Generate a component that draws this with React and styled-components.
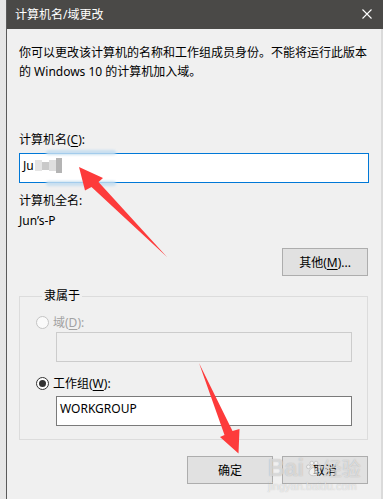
import React from 'react'
import styled, { createGlobalStyle } from 'styled-components'

const GlobalStyle = createGlobalStyle`
    html, body {
        margin: 0;
        padding: 0;
    }
    body {
        font-family: "Noto Sans", "Noto Sans CJK SC", sans-serif;
        font-size: 12px;
        color: #000;
        overflow: hidden;
    }
`

const FONT = `"Noto Sans", "Noto Sans CJK SC", sans-serif`

export default function App() {
    return (
        <SCREEN_STY>
            <GlobalStyle />
            <Window>
                <TitleBar>
                    <Title>计算机名/域更改</Title>
                    <CloseIcon viewBox="0 0 10 10">
                        <path d="M0.5 0.5 L9.5 9.5 M9.5 0.5 L0.5 9.5" />
                    </CloseIcon>
                </TitleBar>

                <Body>
                    <Intro>
                        你可以更改该计算机的名称和工作组成员身份。不能将运行此版本
                        <br />
                        的 Windows 10 的计算机加入域。
                    </Intro>

                    <FieldLabel $top={51}>计算机名(<AccessKey>C</AccessKey>):</FieldLabel>
                    <TextBox $state="focused" $top={5}>
                        Ju
                        <Mosaic>
                            <i style={{ background: '#e4e4e4' }} />
                            <i style={{ background: '#c9c9c9' }} />
                            <i style={{ background: '#dedede' }} />
                            <i style={{ background: '#b4b4b4' }} />
                        </Mosaic>
                        <Smear $pos="top" />
                        <Smear $pos="bottom" />
                    </TextBox>

                    <FieldLabel $top={10}>计算机全名:</FieldLabel>
                    <FieldLabel $top={4}>Jun’s-P</FieldLabel>

                    <ButtonRow $top={19}>
                        <Button>其他(<AccessKey>M</AccessKey>)...</Button>
                    </ButtonRow>

                    <GroupBox>
                        <Legend>隶属于</Legend>
                        <RadioRow $disabled $top={10}>
                            <Radio $disabled />
                            <span>域(<AccessKey>D</AccessKey>):</span>
                        </RadioRow>
                        <TextBox $state="disabled" $top={2} $indent />
                        <RadioRow $top={13}>
                            <Radio $checked />
                            <span>工作组(<AccessKey>W</AccessKey>):</span>
                        </RadioRow>
                        <TextBox $top={5} $indent>WORKGROUP</TextBox>
                    </GroupBox>

                    <ButtonRow $top={16}>
                        <Button>确定</Button>
                        <Button>取消</Button>
                    </ButtonRow>
                </Body>
            </Window>

            <Arrows viewBox="0 0 383 499">
                <polygon points="79,167 103,178 98.5,182 167,257 91.5,187 85,190.5" />
                <polygon points="199,363 232.5,431 239.5,429 238.5,453.5 220,437 224.5,435" />
            </Arrows>

            <Watermark>
                <div className="brand">
                    Bai
                    <svg viewBox="0 0 20 20" width="17" height="17">
                        <circle cx="4" cy="8" r="2.2" />
                        <circle cx="8" cy="3.6" r="2.2" />
                        <circle cx="13" cy="3.6" r="2.2" />
                        <circle cx="17" cy="8" r="2.2" />
                        <path d="M10 9 C6 9 3.5 15 5.5 17 C7.5 19 12.5 19 14.5 17 C16.5 15 14 9 10 9 Z" />
                    </svg>
                    <span className="cn">经验</span>
                </div>
                <div className="url">jingyan.baidu.com</div>
            </Watermark>
        </SCREEN_STY>
    )
}

const SCREEN_STY = styled.div`
    position: relative;
    display: flex;
    width: 383px;
    height: 499px;
    padding-left: 6px;
    box-sizing: border-box;
    background: linear-gradient(to right, #e6e6e6, #cdcdcd);
`

const Window = styled.div`
    flex: 1;
    min-width: 0;
    display: flex;
    flex-direction: column;
    border-left: 1px solid #5a5a5a;
    background: #f0f0f0;
`

const TitleBar = styled.div`
    height: 29px;
    flex: none;
    display: flex;
    align-items: center;
    justify-content: space-between;
    padding: 0 11px 0 8px;
    background: #4a4947;
`

const Title = styled.span`
    font-family: ${FONT};
    font-size: 12px;
    color: #ffffff;
    line-height: 29px;
`

const CloseIcon = styled.svg`
    width: 10px;
    height: 10px;
    margin-top: -1px;
    stroke: #ffffff;
    stroke-width: 1.1;
    fill: none;
`

const Body = styled.div`
    flex: 1;
    min-width: 0;
    display: flex;
    flex-direction: column;
    padding: 14px 12px 0 12px;
    border-right: 2px solid #dadada;
`

const Intro = styled.p`
    margin: 0;
    font-family: ${FONT};
    font-size: 12px;
    line-height: 19px;
    white-space: nowrap;
`

const FieldLabel = styled.div`
    margin-top: ${p => p.$top}px;
    font-family: ${FONT};
    font-size: 12px;
    line-height: 16px;
`

const AccessKey = styled.u`
    text-decoration: underline;
    text-underline-offset: 2px;
`

const borders = {
    focused: '#0078d7',
    disabled: '#cccccc',
    normal: '#7a7a7a',
}

const TextBox = styled.div`
    position: relative;
    display: flex;
    align-items: flex-start;
    box-sizing: border-box;
    height: 30px;
    margin-top: ${p => p.$top}px;
    margin-left: ${p => (p.$indent ? 20 : 0)}px;
    padding: 4px 3px 0;
    border: 1px solid ${p => borders[p.$state || 'normal']};
    background: ${p => (p.$state === 'disabled' ? '#f0f0f0' : '#ffffff')};
    font-family: ${FONT};
    font-size: 12px;
    line-height: 16px;
`

const Mosaic = styled.span`
    display: inline-flex;
    margin: 2px 0 0 1px;
    filter: blur(0.7px);
    i {
        display: block;
        width: 7px;
        height: 11px;
    }
    i:nth-child(2) { height: 8px; margin-top: 2px; }
    i:nth-child(4) { height: 15px; margin-top: -2px; width: 6px; }
`

const Smear = styled.span`
    position: absolute;
    left: 26px;
    width: 70px;
    height: 5px;
    ${p => (p.$pos === 'top' ? 'top: -4px;' : 'bottom: -4px;')}
    background: #c5def0;
    border-radius: 4px;
    filter: blur(1.2px);
    opacity: 0.9;
`

const ButtonRow = styled.div`
    display: flex;
    justify-content: flex-end;
    gap: 9px;
    margin-top: ${p => p.$top}px;
    padding-right: 1px;
`

const Button = styled.div`
    box-sizing: border-box;
    width: 86px;
    height: 28px;
    display: flex;
    align-items: center;
    justify-content: center;
    border: 1px solid #adadad;
    background: #e1e1e1;
    font-family: ${FONT};
    font-size: 12px;
`

const GroupBox = styled.fieldset`
    margin: 12px 1px 0 0;
    padding: 0 15px 13px 16px;
    border: 1px solid #dcdcdc;
    min-width: 0;
`

const Legend = styled.legend`
    margin-left: 6px;
    padding: 0 2px;
    font-family: ${FONT};
    font-size: 12px;
    line-height: 16px;
`

const RadioRow = styled.div`
    display: flex;
    align-items: center;
    gap: 4px;
    height: 16px;
    margin-top: ${p => p.$top}px;
    font-family: ${FONT};
    font-size: 12px;
    color: ${p => (p.$disabled ? '#a2a2a2' : '#000000')};
`

const Radio = styled.span`
    position: relative;
    flex: none;
    box-sizing: border-box;
    width: 13px;
    height: 13px;
    border-radius: 50%;
    border: 1px solid ${p => (p.$disabled ? '#c4c4c4' : '#333333')};
    background: ${p => (p.$disabled ? '#fafafa' : '#ffffff')};
    &::after {
        content: '';
        display: ${p => (p.$checked ? 'block' : 'none')};
        position: absolute;
        left: 2px;
        top: 2px;
        width: 7px;
        height: 7px;
        border-radius: 50%;
        background: #333333;
    }
`

const Arrows = styled.svg`
    position: absolute;
    left: 0;
    top: 0;
    width: 383px;
    height: 499px;
    pointer-events: none;
    polygon {
        fill: #fd3b3b;
    }
`

const Watermark = styled.div`
    position: absolute;
    left: 268px;
    top: 454px;
    pointer-events: none;
    font-family: "Liberation Sans", "Noto Sans CJK SC", sans-serif;
    .brand {
        display: flex;
        align-items: center;
        font-size: 23px;
        font-weight: bold;
        line-height: 28px;
        color: rgba(255, 255, 255, 0.55);
        text-shadow: 0 0 1px rgba(140, 140, 140, 0.7);
        svg {
            margin: 0 1px 0 1px;
            fill: rgba(255, 255, 255, 0.55);
            stroke: rgba(150, 150, 150, 0.6);
            stroke-width: 0.8;
        }
        .cn {
            font-family: "Noto Sans CJK SC", sans-serif;
            font-size: 19px;
            font-weight: normal;
        }
    }
    .url {
        margin: -2px 0 0 0;
        font-size: 11px;
        line-height: 12px;
        color: rgba(255, 255, 255, 0.6);
        text-shadow: 0 0 1px rgba(150, 150, 150, 0.6);
    }
`
